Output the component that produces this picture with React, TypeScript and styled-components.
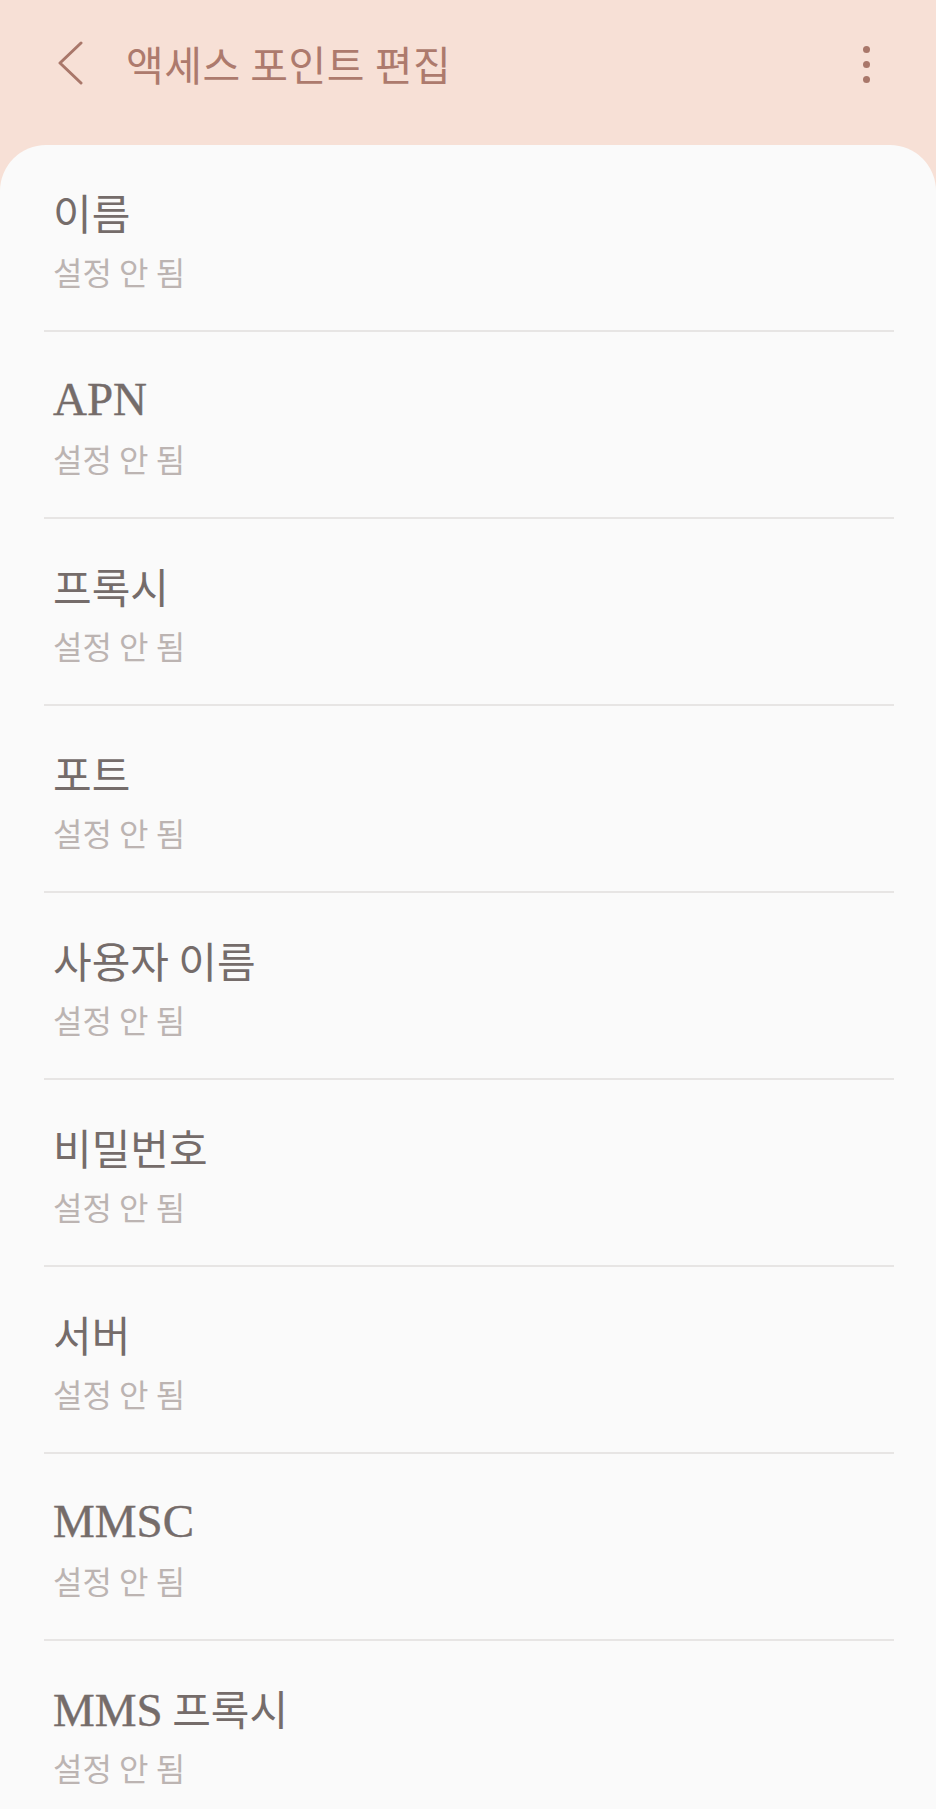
import React from "react";
import styled, { createGlobalStyle } from "styled-components";

const GlobalStyle = createGlobalStyle`
  html, body {
    margin: 0;
    padding: 0;
    overflow: hidden;
    background: #f7e0d6;
  }
  body {
    font-family: "Noto Sans CJK KR", "Noto Sans", sans-serif;
  }
`;

const Page = styled.div`
  width: 936px;
  min-height: 1809px;
  background: #f7e0d6;
  display: flex;
  flex-direction: column;
`;

const Header = styled.header`
  height: 126px;
  display: flex;
  align-items: center;
  padding: 0 66px 0 56px;
  box-sizing: border-box;
`;

const IconButton = styled.button`
  border: none;
  background: transparent;
  padding: 0;
  display: flex;
  align-items: center;
  justify-content: center;
  color: #a9776a;
`;

const Title = styled.h1`
  margin: 0 0 0 42px;
  flex: 1;
  font-family: "Noto Sans CJK KR", sans-serif;
  font-weight: 400;
  font-size: 41px;
  line-height: 48px;
  color: #ad7a6d;
  letter-spacing: 0.5px;
`;

const MoreDots = styled.div`
  display: flex;
  flex-direction: column;
  gap: 8px;
  align-items: center;
  padding-top: 2px;
`;

const Dot = styled.span`
  width: 7px;
  height: 7px;
  border-radius: 50%;
  background: #a9776a;
`;

const Card = styled.main`
  margin-top: 19px;
  flex: 1;
  background: #fafafa;
  border-radius: 46px 46px 0 0;
  display: flex;
  flex-direction: column;
`;

const Item = styled.div`
  height: 185px;
  display: flex;
  flex-direction: column;
  justify-content: center;
  padding: 0 0 0 53px;
  box-sizing: border-box;
`;

const ItemTitle = styled.div`
  font-family: "Noto Sans CJK KR", sans-serif;
  font-size: 42px;
  line-height: 56px;
  color: #756c6a;
  height: 56px;
  display: flex;
  align-items: baseline;
  white-space: pre;
`;

const Latin = styled.span`
  font-family: "Liberation Serif", "Noto Sans CJK KR", serif;
  font-size: 47px;
  -webkit-text-stroke: 0.4px #756c6a;
`;

const ItemSub = styled.div`
  font-family: "Noto Sans CJK KR", sans-serif;
  font-size: 32px;
  line-height: 40px;
  color: #bcb4b2;
  margin-top: 11px;
`;

const Divider = styled.hr`
  margin: 0 42px 0 44px;
  border: none;
  height: 2px;
  background: #e7e5e4;
`;

const items = [
  "이름",
  "APN",
  "프록시",
  "포트",
  "사용자 이름",
  "비밀번호",
  "서버",
  "MMSC",
  "MMS 프록시",
];

function renderTitle(text: string) {
  return text.split(/([A-Za-z]+)/).filter(Boolean).map((part, i) =>
    /^[A-Za-z]+$/.test(part) ? <Latin key={i}>{part}</Latin> : <span key={i}>{part}</span>
  );
}

export default function App() {
  return (
    <>
      <GlobalStyle />
      <Page>
        <Header>
          <IconButton aria-label="뒤로">
            <svg width="28" height="44" viewBox="0 0 28 44" fill="none">
              <polyline
                points="25,2 4,22 25,42"
                stroke="currentColor"
                strokeWidth="3"
                strokeLinecap="round"
                strokeLinejoin="round"
              />
            </svg>
          </IconButton>
          <Title>액세스 포인트 편집</Title>
          <MoreDots aria-label="더보기">
            <Dot />
            <Dot />
            <Dot />
          </MoreDots>
        </Header>
        <Card>
          {items.map((t, i) => (
            <React.Fragment key={t}>
              {i > 0 && <Divider />}
              <Item>
                <ItemTitle>{renderTitle(t)}</ItemTitle>
                <ItemSub>설정 안 됨</ItemSub>
              </Item>
            </React.Fragment>
          ))}
        </Card>
      </Page>
    </>
  );
}
